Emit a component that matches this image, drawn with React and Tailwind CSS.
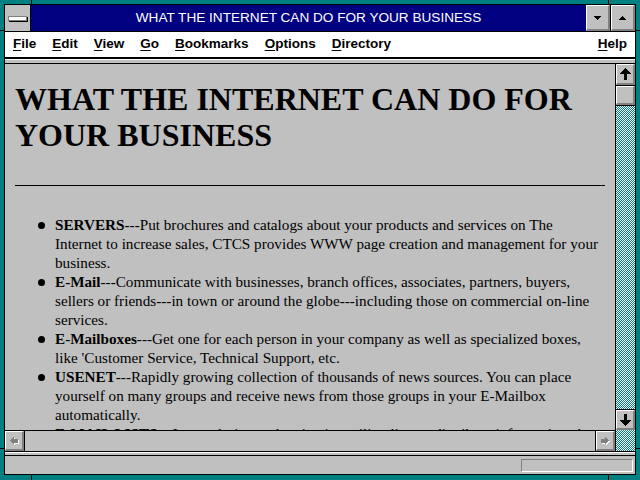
import React from "react";

const bevel =
  "bg-[#c0c0c0] border-t border-l border-t-white border-l-white border-b-2 border-r-2 border-b-[#808080] border-r-[#808080]";

const dither =
  "bg-[image:repeating-conic-gradient(#008080_0%_25%,#ffffff_0%_50%)] bg-[length:2px_2px]";

function UpArrow() {
  return (
    <svg width="11" height="12" viewBox="0 0 11 12" shapeRendering="crispEdges">
      <polygon points="5.5,0 11,6 7,6 7,12 4,12 4,6 0,6" fill="#000" />
    </svg>
  );
}

function DownArrow() {
  return (
    <svg width="11" height="12" viewBox="0 0 11 12" shapeRendering="crispEdges">
      <polygon points="5.5,12 11,6 7,6 7,0 4,0 4,6 0,6" fill="#000" />
    </svg>
  );
}

function GrayLeft() {
  return (
    <svg width="10" height="9" viewBox="0 0 10 9" shapeRendering="crispEdges">
      <polygon points="1,4.5 5,0.5 5,3 9,3 9,7 5,7 5,8.5" fill="#fff" transform="translate(1,1)" />
      <polygon points="1,4.5 5,0.5 5,3 9,3 9,7 5,7 5,8.5" fill="#808080" />
    </svg>
  );
}

function GrayRight() {
  return (
    <svg width="10" height="9" viewBox="0 0 10 9" shapeRendering="crispEdges">
      <polygon points="9,4.5 5,0.5 5,3 1,3 1,7 5,7 5,8.5" fill="#fff" transform="translate(1,1)" />
      <polygon points="9,4.5 5,0.5 5,3 1,3 1,7 5,7 5,8.5" fill="#808080" />
    </svg>
  );
}

function MenuItem({ first, rest, className = "" }) {
  return (
    <span className={"px-[8px] " + className}>
      <span className="underline underline-offset-2">{first}</span>
      {rest}
    </span>
  );
}

function Bullet({ children }) {
  return (
    <li className="flex items-start">
      <div className="w-[40px] shrink-0">
        <div className="ml-[23px] mt-[7px] w-[7px] h-[7px] rounded-full bg-black" />
      </div>
      <div className="whitespace-nowrap">{children}</div>
    </li>
  );
}

export default function App() {
  return (
    <div className="relative w-[640px] h-[480px] bg-[#008080] pt-[4px] px-[4px] pb-[5px] overflow-hidden">
      {/* frame corner ticks */}
      <div className="absolute left-[31px] top-0 w-px h-[4px] bg-black" />
      <div className="absolute left-[608px] top-0 w-px h-[4px] bg-black" />
      <div className="absolute left-[31px] bottom-0 w-px h-[5px] bg-black" />
      <div className="absolute left-[608px] bottom-0 w-px h-[5px] bg-black" />
      <div className="absolute left-0 top-[30px] w-[4px] h-px bg-black" />
      <div className="absolute right-0 top-[30px] w-[4px] h-px bg-black" />
      <div className="absolute left-0 top-[448px] w-[4px] h-px bg-black" />
      <div className="absolute right-0 top-[448px] w-[4px] h-px bg-black" />

      <div className="w-full h-full border border-black flex flex-col bg-[#c0c0c0]">
        {/* Title bar */}
        <div className="flex h-[27px] border-b border-black shrink-0">
          <div className="w-[26px] border-r border-black bg-[#c0c0c0] flex items-center justify-center">
            <div className="w-[19px] h-[5px] bg-white border border-[#808080] shadow-[1px_1px_0_#000]" />
          </div>
          <div className="flex-1 bg-[#000080] flex items-center justify-center text-white text-[13.6px] font-['Liberation_Sans',Arial,sans-serif] leading-none">
            WHAT THE INTERNET CAN DO FOR YOUR BUSINESS
          </div>
          <div className={"w-[24px] border-l border-l-black flex items-center justify-center " + bevel}>
            <svg width="7" height="4" viewBox="0 0 7 4" shapeRendering="crispEdges">
              <polygon points="0,0 7,0 3.5,4" fill="#000" />
            </svg>
          </div>
          <div className="w-px bg-black" />
          <div className={"w-[24px] flex items-center justify-center " + bevel}>
            <svg width="7" height="4" viewBox="0 0 7 4" shapeRendering="crispEdges">
              <polygon points="0,4 7,4 3.5,0" fill="#000" />
            </svg>
          </div>
        </div>

        {/* Menu bar */}
        <div className="h-[25px] bg-white flex items-center text-[13.5px] font-bold text-black font-['Liberation_Sans',Arial,sans-serif] shrink-0">
          <MenuItem first="F" rest="ile" />
          <MenuItem first="E" rest="dit" />
          <MenuItem first="V" rest="iew" />
          <MenuItem first="G" rest="o" />
          <MenuItem first="B" rest="ookmarks" />
          <MenuItem first="O" rest="ptions" />
          <MenuItem first="D" rest="irectory" />
          <MenuItem first="H" rest="elp" className="ml-auto" />
        </div>

        {/* separator */}
        <div className="h-[7px] shrink-0 border-t-2 border-b border-black bg-[#c0c0c0] shadow-[inset_0_1px_0_#fff]" />

        {/* Main area */}
        <div className="flex h-[387px] shrink-0">
          <div className="w-[610px] flex flex-col">
            <div className="h-[366px] overflow-hidden pt-[17px] px-[10px] text-black font-['Liberation_Serif','Times_New_Roman',serif]">
              <h1 className="text-[32px] leading-[36px] font-bold m-0">
                WHAT THE INTERNET CAN DO FOR
                <br />
                YOUR BUSINESS
              </h1>
              <div className="mt-[32px] h-px bg-black" />
              <ul className="mt-[29px] text-[15.2px] leading-[19px]">
                <Bullet>
                  <b>SERVERS</b>---Put brochures and catalogs about your products and services on The
                  <br />
                  Internet to increase sales, CTCS provides WWW page creation and management for your
                  <br />
                  business.
                </Bullet>
                <Bullet>
                  <b>E-Mail</b>---Communicate with businesses, branch offices, associates, partners, buyers,
                  <br />
                  sellers or friends---in town or around the globe---including those on commercial on-line
                  <br />
                  services.
                </Bullet>
                <Bullet>
                  <b>E-Mailboxes</b>---Get one for each person in your company as well as specialized boxes,
                  <br />
                  like 'Customer Service, Technical Support, etc.
                </Bullet>
                <Bullet>
                  <b>USENET</b>---Rapidly growing collection of thousands of news sources. You can place
                  <br />
                  yourself on many groups and receive news from those groups in your E-Mailbox
                  <br />
                  automatically.
                </Bullet>
                <Bullet>
                  <b>E-MAIL LISTS</b>---Let us design and maintain mailing lists to distribute information about
                  <br />
                  your business to your customers.
                </Bullet>
              </ul>
            </div>
            {/* horizontal scrollbar */}
            <div className="h-[21px] border-t border-black flex">
              <div className={"w-[19px] flex items-center justify-center " + bevel}>
                <GrayLeft />
              </div>
              <div className="w-px bg-black" />
              <div className="flex-1 bg-[#c0c0c0]" />
              <div className="w-px bg-black" />
              <div className={"w-[19px] flex items-center justify-center " + bevel}>
                <GrayRight />
              </div>
            </div>
          </div>
          {/* vertical scrollbar */}
          <div className="w-[20px] border-l border-black flex flex-col">
            <div className={"h-[21px] flex items-center justify-center " + bevel}>
              <UpArrow />
            </div>
            <div className="h-px bg-black" />
            <div className={"h-[19px] " + bevel} />
            <div className="h-px bg-black" />
            <div className={"flex-1 " + dither} />
            <div className="h-px bg-black" />
            <div className={"h-[20px] flex items-center justify-center " + bevel}>
              <DownArrow />
            </div>
            <div className={"h-[21px] " + dither} />
          </div>
        </div>

        {/* bottom separator */}
        <div className="h-[5px] shrink-0 border-y border-black bg-[#c0c0c0] shadow-[inset_0_1px_0_#fff]" />

        {/* status bar */}
        <div className="flex-1 flex justify-end items-start">
          <div className="mt-[3px] mr-[2px] w-[112px] h-[13px] border-t border-l border-t-[#808080] border-l-[#808080] border-b border-r border-b-white border-r-white" />
        </div>
      </div>
    </div>
  );
}
